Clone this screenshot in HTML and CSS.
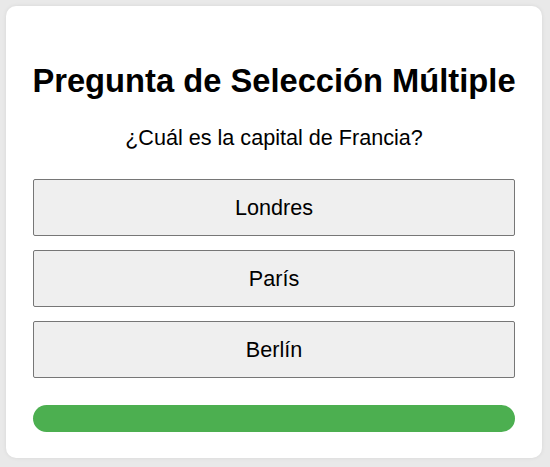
FILE: index.html
```html
<!DOCTYPE html>
<html lang="es">
<head>
<meta charset="utf-8">
<title>Pregunta de Selección Múltiple</title>
<link rel="stylesheet" href="styles.css">
</head>
<body>
<div class="card">
  <h1 class="title">Pregunta de Selección Múltiple</h1>
  <p class="question">¿Cuál es la capital de Francia?</p>
  <div class="options">
    <button class="option">Londres</button>
    <button class="option">París</button>
    <button class="option">Berlín</button>
  </div>
  <div class="progress"></div>
</div>
</body>
</html>
```
FILE: styles.css
```css
html, body {
  margin: 0;
  padding: 0;
}
body {
  background: #e9e9e9;
  font-family: "Liberation Sans", Arial, sans-serif;
  color: #000;
  padding: 6px 8px 9px 6px;
}
.card {
  background: #fff;
  border-radius: 10px;
  box-shadow: 0 0 4px rgba(0,0,0,0.08);
  padding: 56px 27px 26px 27px;
  display: flex;
  flex-direction: column;
}
.title {
  margin: 0 -10px;
  font-size: 32.7px;
  font-weight: bold;
  text-align: center;
  line-height: 37px;
  white-space: nowrap;
}
.question {
  margin: 26px 0 0 0;
  font-size: 21.6px;
  line-height: 25px;
  text-align: center;
}
.options {
  margin-top: 29px;
  display: flex;
  flex-direction: column;
  gap: 14px;
}
.option {
  font-family: "Liberation Sans", Arial, sans-serif;
  font-size: 21.6px;
  line-height: 25px;
  padding: 15px;
  background: #efefef;
  border: 1px solid #767676;
  border-radius: 2px;
  color: #000;
  text-align: center;
}
.progress {
  margin-top: 27px;
  height: 27px;
  border-radius: 14px;
  background: #4caf50;
}
```
